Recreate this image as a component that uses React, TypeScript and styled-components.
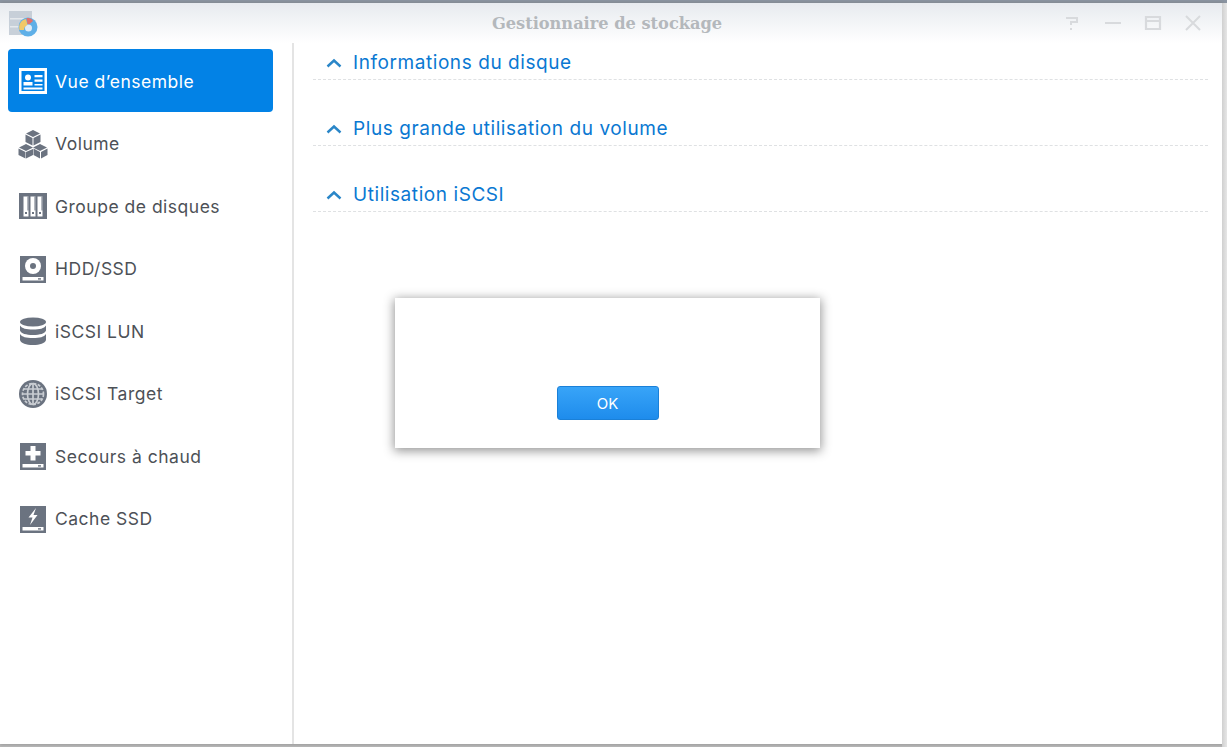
import React from "react";
import styled, { createGlobalStyle } from "styled-components";

const Global = createGlobalStyle`
  html, body { margin: 0; padding: 0; background: #fff; }
  body { font-family: Inter, "Noto Sans", sans-serif; }
`;

const Viewport = styled.div`
  width: 1227px;
  height: 747px;
  position: relative;
  overflow: hidden;
  display: flex;
  flex-direction: column;
  background: #b9b9b9;
`;

const TopEdge = styled.div`
  height: 3px;
  flex: none;
  background: #8b95a3;
`;

const Frame = styled.div`
  width: 1222px;
  height: 741px;
  flex: none;
  display: flex;
  flex-direction: column;
  background: #fff;
  box-shadow: 1px 0 3px 1px rgba(120, 120, 120, 0.45);
`;

const RightShade = styled.div`
  position: absolute;
  top: 3px;
  right: 0;
  width: 5px;
  height: 744px;
  background: linear-gradient(90deg, #d0d0d0, #e6e6e6);
`;

const TitleBar = styled.header`
  height: 40px;
  flex: none;
  display: flex;
  align-items: center;
  padding-left: 9px;
  background: linear-gradient(180deg, #e7eaef 0%, #f3f5f7 50%, #ffffff 100%);
`;

const AppIcon = styled.svg`
  width: 30px;
  height: 30px;
  flex: none;
  margin-top: 1px;
  filter: blur(0.6px);
  opacity: 0.9;
`;

const Title = styled.h1`
  flex: 1;
  margin: 0;
  padding-left: 122px;
  text-align: center;
  font: bold 16.2px "DejaVu Serif", serif;
  color: #b4b8bc;
`;

const Controls = styled.div`
  display: flex;
  margin-right: 9px;
`;

const ControlIcon = styled.svg`
  width: 40px;
  height: 20px;
  fill: none;
  stroke: #d8dadd;
  stroke-width: 2;
`;

const Body = styled.div`
  flex: 1;
  display: flex;
  min-height: 0;
`;

const Sidebar = styled.nav`
  width: 294px;
  flex: none;
  box-sizing: border-box;
  padding: 6px 19px 0 8px;
  border-right: 2px solid #e4e4e4;
  display: grid;
  grid-auto-rows: 62.5px;
  align-content: start;
`;

const NavItem = styled.div<{ $active?: boolean }>`
  display: flex;
  align-items: center;
  gap: 7px;
  padding: 2px 0 0 10px;
  border-radius: 4px;
  font-size: 17.5px;
  letter-spacing: 0.5px;
  color: ${(p) => (p.$active ? "#ffffff" : "#4d5157")};
  background: ${(p) => (p.$active ? "#0282e6" : "transparent")};
`;

const NavIcon = styled.svg<{ $active?: boolean }>`
  width: 30px;
  height: 30px;
  flex: none;
  color: ${(p) => (p.$active ? "#ffffff" : "#6b7380")};
`;

const Content = styled.main`
  flex: 1;
  padding: 0 14px 0 19px;
  display: flex;
  flex-direction: column;
  gap: 32px;
`;

const SectionHeader = styled.div`
  height: 33px;
  margin-top: 3px;
  display: flex;
  align-items: center;
  gap: 11px;
  padding-left: 13px;
  border-bottom: 1px dashed #dfe1e3;
  font-size: 19px;
  letter-spacing: 0.57px;
  color: #0a78d2;

  & + & {
    margin-top: 0;
  }
`;

const Chevron = styled.svg`
  width: 16px;
  height: 10px;
  flex: none;
  fill: none;
  stroke: #2a86c8;
  stroke-width: 2.4;
`;

const Dialog = styled.div`
  position: absolute;
  left: 395px;
  top: 298px;
  width: 425px;
  height: 150px;
  box-sizing: border-box;
  padding-bottom: 28px;
  display: flex;
  align-items: flex-end;
  justify-content: center;
  background: #fff;
  box-shadow: 0 2px 10px 1px rgba(0, 0, 0, 0.42);
`;

const OkButton = styled.button`
  width: 102px;
  height: 34px;
  border: 1px solid #1a80d8;
  border-radius: 3px;
  background: linear-gradient(180deg, #38a4f8 0%, #1e8cec 100%);
  color: #fff;
  font: 15px Inter, sans-serif;
  padding: 0;
`;

const driveBar = (
  <>
    <path fill="#fff" d="M4.500 23h21v3.500h-21z" />
    <path fill="currentColor" d="M20 24.200h3v1.400h-3z" />
  </>
);

const icons: React.ReactNode[] = [
  <>
    <path fillRule="evenodd" fill="currentColor" d="M1 2h28v26H1zM3.500 5v20h23V5z" />
    <circle cx="10" cy="11.500" r="3" fill="currentColor" />
    <path fill="currentColor" d="M5.500 16h9v3.500h-9zM16.500 9h8v2.200h-8zM16.500 13.500h8v2.200h-8zM5.500 21.500h19v2h-19zM16.500 18h8v1.500h-8z" />
  </>,
  <>
    <path fill="currentColor" d="M15 1l7 3.500-7 3.500-7-3.500zM7.500 5.500l7 3.500v7.500l-7-3.500zM22.500 5.500v7.500l-7 3.500V9z" />
    <path fill="currentColor" d="M8 15l7 3.500-7 3.500-7-3.500zM.5 19.500l7 3.500v6.500l-7-3.500zM15 20l0 6-7 3.500V23zM22 15l7 3.500-7 3.500-7-3.500zM15.500 19.500l6.500 3.500v6.500l-6.500-3.500zM29.500 19.500V26L23 29.500V23z" />
  </>,
  <>
    <path fill="currentColor" d="M1 2h28v26H1z" />
    <path fill="#fff" d="M5.500 5.500h5v20h-5zM12.500 5.500h5v20h-5zM19.500 5.500h5v20h-5z" />
    <path fill="currentColor" d="M7 21h2v2H7zM14 21h2v2h-2zM21 21h2v2h-2zM9.500 5.500h1v14h-1zM16.500 5.500h1v14h-1zM23.500 5.500h1v14h-1z" />
  </>,
  <>
    <path fill="currentColor" d="M2 2h26v27H2z" />
    <circle cx="15" cy="12" r="8" fill="#fff" />
    <circle cx="15" cy="12" r="3" fill="currentColor" />
    {driveBar}
  </>,
  <>
    <ellipse cx="15" cy="6" rx="13" ry="4.500" fill="currentColor" />
    <path fill="currentColor" d="M2 9.500c2 3 6 4 13 4s11-1 13-4v5c-1 3-6 4.500-13 4.500S3 17.500 2 14.500z" />
    <path fill="currentColor" d="M2 18c2 3 6 4 13 4s11-1 13-4v6c-1 3.500-6 5-13 5S3 27.500 2 24z" />
  </>,
  <>
    <circle cx="15" cy="15" r="14" fill="currentColor" />
    <g fill="none" stroke="#c9cdd2" strokeWidth="1.700">
      <ellipse cx="15" cy="15" rx="5.500" ry="10.500" />
      <path d="M15 4.500v21M4.500 15h21M6 10h18M6 20h18" />
      <circle cx="15" cy="15" r="10.500" strokeDasharray="3 1.500" />
    </g>
  </>,
  <>
    <path fill="currentColor" d="M2 2h26v27H2z" />
    <path fill="#fff" d="M12.500 5h5v5h5v4.500h-5v5h-5v-5h-5V10h5z" />
    {driveBar}
  </>,
  <>
    <path fill="currentColor" d="M2 2h26v27H2z" />
    <path fill="#fff" d="M18 4l-7.500 9.500h4L12 21l7.500-10h-4z" />
    {driveBar}
  </>,
];

const navLabels = [
  "Vue d’ensemble",
  "Volume",
  "Groupe de disques",
  "HDD/SSD",
  "iSCSI LUN",
  "iSCSI Target",
  "Secours à chaud",
  "Cache SSD",
];

const sections = ["Informations du disque", "Plus grande utilisation du volume", "Utilisation iSCSI"];

export default function App() {
  return (
    <Viewport>
      <Global />
      <TopEdge />
      <RightShade />
      <Frame>
        <TitleBar>
          <AppIcon viewBox="0 0 30 30">
            <path fill="#c3ccd6" d="M0 2h23v24H0z" />
            <path fill="#e4e8ec" d="M1 9h21v1.500H1zM1 17h21v1.500H1z" />
            <circle cx="19" cy="18" r="9.500" fill="#4fa8e6" />
            <circle cx="19.500" cy="19" r="3.500" fill="#dceaf6" />
            <path fill="#f1c458" d="M10.500 21c-1.500-6 2-10 6.500-11l1.500 6c-2 .5-3.500 2.500-3.500 5z" />
            <path fill="#e2635c" d="M17.500 9c3-.5 5.500.5 6.500 3l-4 3.500c-.5-.5-1-.5-1.500-.5z" />
          </AppIcon>
          <Title>Gestionnaire de stockage</Title>
          <Controls>
            <ControlIcon viewBox="0 0 40 20">
              <path d="M13 5h11v4h-6v3M18 15v2" />
            </ControlIcon>
            <ControlIcon viewBox="0 0 40 20">
              <path d="M12 10h16" />
            </ControlIcon>
            <ControlIcon viewBox="0 0 40 20">
              <path d="M13 4h14v12H13zM13 8h14" strokeWidth="2.200" />
            </ControlIcon>
            <ControlIcon viewBox="0 0 40 20">
              <path d="M13 3l14 14M27 3L13 17" />
            </ControlIcon>
          </Controls>
        </TitleBar>
        <Body>
          <Sidebar>
            {navLabels.map((label, i) => (
              <NavItem key={label} $active={i === 0}>
                <NavIcon $active={i === 0} viewBox="0 0 30 30">
                  {icons[i]}
                </NavIcon>
                {label}
              </NavItem>
            ))}
          </Sidebar>
          <Content>
            {sections.map((s) => (
              <SectionHeader key={s}>
                <Chevron viewBox="0 0 16 10">
                  <path d="M1.500 8.500L8 2.500l6.500 6" />
                </Chevron>
                {s}
              </SectionHeader>
            ))}
          </Content>
        </Body>
      </Frame>
      <Dialog>
        <OkButton>OK</OkButton>
      </Dialog>
    </Viewport>
  );
}
